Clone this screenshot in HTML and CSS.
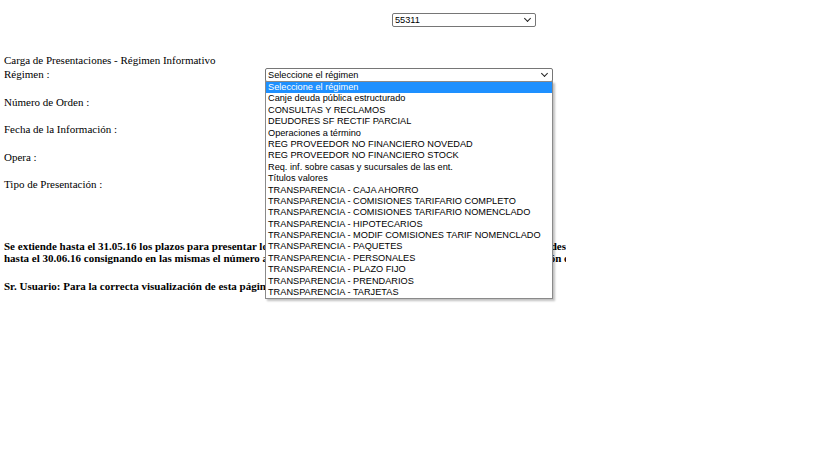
FILE: index.html
```html
<!DOCTYPE html>
<html>
<head>
<meta charset="utf-8">
<meta name="viewport" content="width=device-width, initial-scale=1">
<link rel="stylesheet" href="styles.css">
</head>
<body>

<div class="topbar">
  <div class="fakeSelect entity"><span>55311</span><span class="arrow"></span></div>
</div>

<div class="titleLine">Carga de Presentaciones - Régimen Informativo</div>

<div class="form">
  <div class="row">
    <div class="label">Régimen :</div>
    <div class="field">
      <div class="fakeSelect regimen"><span>Seleccione el régimen</span><span class="arrow"></span></div>
      <ul class="dropList">
        <li class="selected">Seleccione el régimen</li>
        <li>Canje deuda pública estructurado</li>
        <li>CONSULTAS Y RECLAMOS</li>
        <li>DEUDORES SF RECTIF PARCIAL</li>
        <li>Operaciones a término</li>
        <li>REG PROVEEDOR NO FINANCIERO NOVEDAD</li>
        <li>REG PROVEEDOR NO FINANCIERO STOCK</li>
        <li>Req. inf. sobre casas y sucursales de las ent.</li>
        <li>Títulos valores</li>
        <li>TRANSPARENCIA - CAJA AHORRO</li>
        <li>TRANSPARENCIA - COMISIONES TARIFARIO COMPLETO</li>
        <li>TRANSPARENCIA - COMISIONES TARIFARIO NOMENCLADO</li>
        <li>TRANSPARENCIA - HIPOTECARIOS</li>
        <li>TRANSPARENCIA - MODIF COMISIONES TARIF NOMENCLADO</li>
        <li>TRANSPARENCIA - PAQUETES</li>
        <li>TRANSPARENCIA - PERSONALES</li>
        <li>TRANSPARENCIA - PLAZO FIJO</li>
        <li>TRANSPARENCIA - PRENDARIOS</li>
        <li>TRANSPARENCIA - TARJETAS</li>
      </ul>
    </div>
  </div>
  <div class="row"><div class="label">Número de Orden :</div></div>
  <div class="row"><div class="label">Fecha de la Información :</div></div>
  <div class="row"><div class="label">Opera :</div></div>
  <div class="row"><div class="label">Tipo de Presentación :</div></div>
</div>

<div class="notice">
  <div class="line">
    <span class="head">Se extiende hasta el 31.05.16 los plazos para presentar los regímenes informativos</span>
    <span class="tail">con las novedades</span>
  </div>
  <div class="line">
    <span class="head">hasta el 30.06.16 consignando en las mismas el número asignado por la entidad</span>
    <span class="tail cut">según lo establecido en la comunicación c</span>
  </div>
  <div class="line user">Sr. Usuario: Para la correcta visualización de esta página utilice Internet Explorer.</div>
</div>

</body>
</html>
```

FILE: styles.css
```css
html, body {
  min-height: 460px;
}

body {
  margin: 0;
  padding: 0 4px;
  font-family: "Liberation Serif", "Times New Roman", serif;
  font-size: 11px;
  color: #000;
  background: #fff;
}

* {
  box-sizing: border-box;
}

.topbar {
  padding-top: 13px;
  padding-left: 388px;
  height: 54px;
}

.fakeSelect {
  display: flex;
  align-items: center;
  justify-content: space-between;
  height: 14px;
  border: 1px solid #767676;
  border-radius: 2px;
  background: #fff;
  font-family: "Liberation Sans", Arial, sans-serif;
  font-size: 9.2px;
  padding: 0 4px 0 2px;
  color: #000;
}

.entity {
  width: 144px;
}

.regimen {
  width: 288px;
}

.arrow {
  width: 5px;
  height: 5px;
  border-right: 1.7px solid #222;
  border-bottom: 1.7px solid #222;
  transform: rotate(45deg);
  margin-top: -3px;
  margin-right: 1px;
}

.titleLine {
  height: 13px;
  line-height: 13px;
}

.row {
  display: flex;
  height: 27.5px;
}

.label {
  width: 261px;
  line-height: 13px;
  padding-top: 1px;
}

.field {
  position: relative;
  margin-top: 1px;
}

.dropList {
  position: absolute;
  top: 13px;
  left: 0;
  width: 288px;
  margin: 0;
  padding: 0;
  list-style: none;
  background: #fff;
  border: 1px solid #8a8a8a;
  box-shadow: 2px 2px 2px rgba(0, 0, 0, 0.25);
  font-family: "Liberation Sans", Arial, sans-serif;
  font-size: 9.2px;
  z-index: 2;
}

.dropList li {
  height: 11.4px;
  line-height: 11.4px;
  padding-left: 2px;
  white-space: nowrap;
}

.dropList li.selected {
  background: #1e90ff;
  color: #fff;
}

.notice {
  width: 562px;
  overflow: hidden;
  white-space: nowrap;
  font-weight: bold;
  padding-top: 35px;
}

.line {
  display: flex;
  justify-content: space-between;
  line-height: 12.5px;
  height: 12.5px;
}

.line .head {
  min-width: 0;
  overflow: hidden;
}

.line .tail {
  flex-shrink: 0;
  padding-left: 6px;
}

.line .tail.cut {
  margin-right: -3px;
}

.line.user {
  margin-top: 15px;
}
```
